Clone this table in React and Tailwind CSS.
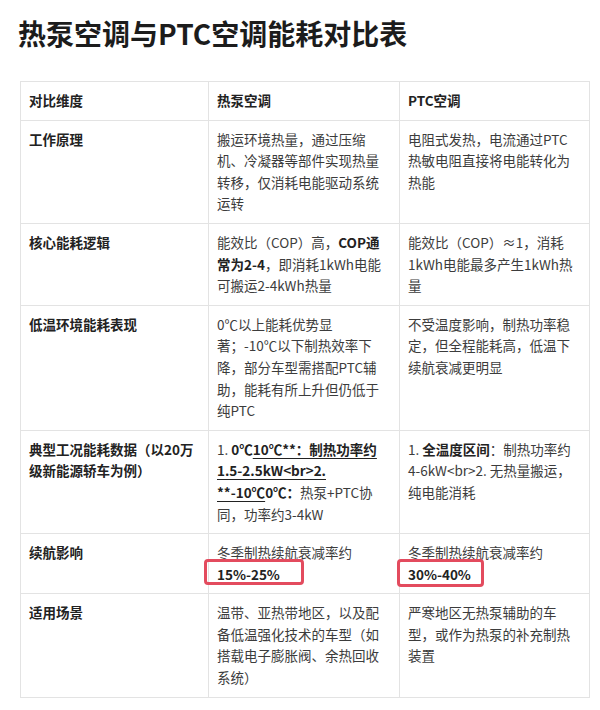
import React from "react";

const font = {
  fontFamily: '"Noto Sans CJK SC", "Noto Sans", sans-serif',
};

const Mark = ({ children, box }) => (
  <span className="relative inline-block font-bold text-[#222]">
    {children}
    <span
      className={`absolute rounded-[4px] border-[3px] border-[#e34b5e] ${box}`}
    />
  </span>
);

const rows = [
  {
    label: "工作原理",
    heat: "搬运环境热量，通过压缩机、冷凝器等部件实现热量转移，仅消耗电能驱动系统运转",
    ptc: "电阻式发热，电流通过PTC热敏电阻直接将电能转化为热能",
  },
  {
    label: "核心能耗逻辑",
    heat: (
      <>
        能效比（COP）高，<b className="font-bold text-[#222]">COP通常为2-4</b>
        ，即消耗1kWh电能可搬运2-4kWh热量
      </>
    ),
    ptc: "能效比（COP）≈1，消耗1kWh电能最多产生1kWh热量",
  },
  {
    label: "低温环境能耗表现",
    heat: "0℃以上能耗优势显著；-10℃以下制热效率下降，部分车型需搭配PTC辅助，能耗有所上升但仍低于纯PTC",
    ptc: "不受温度影响，制热功率稳定，但全程能耗高，低温下续航衰减更明显",
  },
  {
    label: "典型工况能耗数据（以20万级新能源轿车为例）",
    heat: (
      <>
        1. <b className="font-bold text-[#222]">0℃</b>
        <b className="font-bold text-[#222] underline underline-offset-[3px]">
          10℃**：制热功率约1.5-2.5kW&lt;br&gt;2. **-10℃
        </b>
        <b className="font-bold text-[#222]">0℃：</b>热泵+PTC协同，功率约3-4kW
      </>
    ),
    ptc: (
      <>
        1. <b className="font-bold text-[#222]">全温度区间</b>
        ：制热功率约4-6kW&lt;br&gt;2. 无热量搬运，纯电能消耗
      </>
    ),
  },
  {
    label: "续航影响",
    heat: (
      <>
        冬季制热续航衰减率约
        <br />
        <Mark box="-left-[13px] -right-[24px] -top-[5px] bottom-[0px]">
          15%-25%
        </Mark>
      </>
    ),
    ptc: (
      <>
        冬季制热续航衰减率约
        <br />
        <Mark box="-left-[11px] -right-[13px] -top-[5px] -bottom-[2px]">
          30%-40%
        </Mark>
      </>
    ),
  },
  {
    label: "适用场景",
    heat: "温带、亚热带地区，以及配备低温强化技术的车型（如搭载电子膨胀阀、余热回收系统）",
    ptc: "严寒地区无热泵辅助的车型，或作为热泵的补充制热装置",
  },
];

export default function App() {
  return (
    <div
      className="min-h-[710px] w-[600px] bg-white pl-[18px] pt-[13px] text-[#3c3c3c]"
      style={font}
    >
      <h1 className="text-[28px] font-bold leading-[40px] text-[#1c1c1c]">
        热泵空调与PTC空调能耗对比表
      </h1>

      <table className="ml-[2px] mt-[28px] w-[569px] table-fixed border-collapse text-[13.5px] leading-[1.6]">
        <colgroup>
          <col className="w-[188px]" />
          <col className="w-[191px]" />
          <col className="w-[190px]" />
        </colgroup>
        <thead>
          <tr>
            <th className="border border-[#e3e3e3] px-[8px] py-[8px] text-left font-bold text-[#222]">
              对比维度
            </th>
            <th className="border border-[#e3e3e3] px-[8px] py-[8px] text-left font-bold text-[#222]">
              热泵空调
            </th>
            <th className="border border-[#e3e3e3] py-[8px] pl-[8px] pr-[11px] text-left font-bold text-[#222]">
              PTC空调
            </th>
          </tr>
        </thead>
        <tbody>
          {rows.map((r) => (
            <tr key={r.label}>
              <td className="border border-[#e3e3e3] px-[8px] py-[8px] align-top font-bold text-[#222]">
                {r.label}
              </td>
              <td className="border border-[#e3e3e3] px-[8px] py-[8px] align-top">
                {r.heat}
              </td>
              <td className="border border-[#e3e3e3] py-[8px] pl-[8px] pr-[11px] align-top">
                {r.ptc}
              </td>
            </tr>
          ))}
        </tbody>
      </table>
    </div>
  );
}
